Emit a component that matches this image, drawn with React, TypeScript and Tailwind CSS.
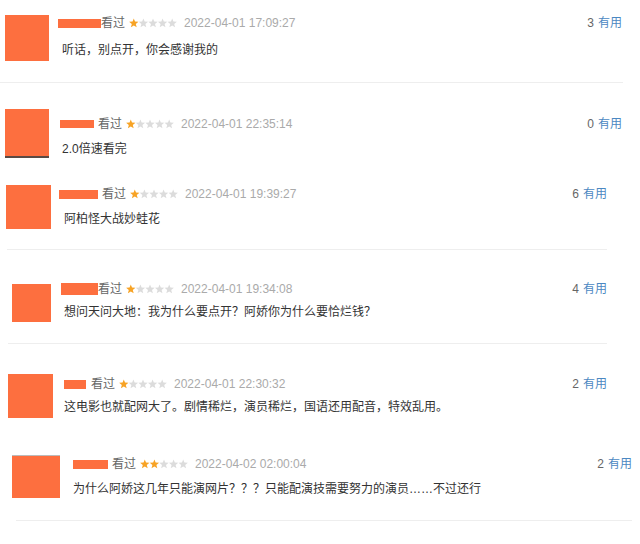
import React from "react";

type Row = {
  block: string;
  content: string;
  avatar: string;
  body: string;
  name: string;
  comment: string;
  divider?: string;
  rating: number;
  date: string;
  text: string;
  useful: number;
};

const rows: Row[] = [
  {
    block: "h-[90px]",
    content: "h-[82px]",
    avatar: "ml-[5px] mt-[15px] w-[44px] h-[46px]",
    body: "ml-[9px] mt-[15px] mr-[18px]",
    name: "w-[43px] h-[9px] mr-0",
    comment: "ml-[4px] mt-[11px]",
    divider: "ml-0 w-[623px]",
    rating: 1,
    date: "2022-04-01 17:09:27",
    text: "听话，别点开，你会感谢我的",
    useful: 3,
  },
  {
    block: "h-[85px]",
    content: "h-[85px]",
    avatar: "ml-[5px] mt-[19px] w-[44px] h-[49px] border-b-2 border-[#5a4a44]",
    body: "ml-[11px] mt-[26px] mr-[18px]",
    name: "w-[34px] h-[8px] mr-[4px]",
    comment: "ml-[2px] mt-[9px]",
    rating: 1,
    date: "2022-04-01 22:35:14",
    text: "2.0倍速看完",
    useful: 0,
  },
  {
    block: "h-[85px]",
    content: "h-[74px]",
    avatar: "ml-[6px] mt-[10px] w-[45px] h-[44px]",
    body: "ml-[8px] mt-[11px] mr-[33px]",
    name: "w-[39px] h-[9px] mr-[4px]",
    comment: "ml-[5px] mt-[9px]",
    divider: "ml-[7px] w-[600px]",
    rating: 1,
    date: "2022-04-01 19:39:27",
    text: "阿柏怪大战妙蛙花",
    useful: 6,
  },
  {
    block: "h-[90px]",
    content: "h-[83px]",
    avatar: "ml-[12px] mt-[24px] w-[39px] h-[38px]",
    body: "ml-[10px] mt-[21px] mr-[33px]",
    name: "w-[37px] h-[12px] mr-0",
    comment: "ml-[3px] mt-[7px]",
    divider: "ml-[8px] w-[599px]",
    rating: 1,
    date: "2022-04-01 19:34:08",
    text: "想问天问大地：我为什么要点开？阿娇你为什么要恰烂钱？",
    useful: 4,
  },
  {
    block: "h-[90px]",
    content: "h-[90px]",
    avatar: "ml-[8px] mt-[24px] w-[45px] h-[44px]",
    body: "ml-[11px] mt-[26px] mr-[33px]",
    name: "w-[22px] h-[9px] mr-[5px]",
    comment: "ml-0 mt-[7px]",
    rating: 1,
    date: "2022-04-01 22:30:32",
    text: "这电影也就配网大了。剧情稀烂，演员稀烂，国语还用配音，特效乱用。",
    useful: 2,
  },
  {
    block: "h-[104px]",
    content: "h-[80px]",
    avatar: "ml-[12px] mt-[15px] w-[48px] h-[43px] border-t border-[#bbbbbb]",
    body: "ml-[13px] mt-[16px] mr-[8px]",
    name: "w-[35px] h-[9px] mr-[4px]",
    comment: "ml-0 mt-[9px]",
    divider: "ml-[16px] w-[616px]",
    rating: 2,
    date: "2022-04-02 02:00:04",
    text: "为什么阿娇这几年只能演网片？？？只能配演技需要努力的演员……不过还行",
    useful: 2,
  },
];

function starPoints(cx: number, cy: number, R: number, r: number) {
  const pts: string[] = [];
  for (let i = 0; i < 10; i++) {
    const ang = -Math.PI / 2 + (i * Math.PI) / 5;
    const rad = i % 2 === 0 ? R : r;
    pts.push(`${(cx + rad * Math.cos(ang)).toFixed(2)},${(cy + rad * Math.sin(ang)).toFixed(2)}`);
  }
  return pts.join(" ");
}

function Stars({ n }: { n: number }) {
  return (
    <svg width="48" height="10" viewBox="0 0 48 10" className="ml-[4px] shrink-0">
      {[0, 1, 2, 3, 4].map((i) => (
        <polygon
          key={i}
          points={starPoints(4.8 + i * 9.6, 5.3, 4.9, 2.1)}
          fill={i < n ? "#f7a325" : "#dcdcdc"}
        />
      ))}
    </svg>
  );
}

export default function App() {
  return (
    <div
      className="w-[640px] h-[544px] overflow-hidden bg-white text-[12px] leading-[16px]"
      style={{ fontFamily: '"Liberation Sans", "Noto Sans CJK SC", Arial, sans-serif' }}
    >
      {rows.map((r, idx) => (
        <div key={idx} className={`${r.block} flex flex-col`}>
          <div className={`flex items-start shrink-0 ${r.content}`}>
            <div className={`bg-[#fd6f3f] shrink-0 ${r.avatar}`} />
            <div className={`flex-1 min-w-0 ${r.body}`}>
              <div className="flex items-center h-[16px] whitespace-nowrap">
                <span className={`bg-[#fd6f3f] shrink-0 ${r.name}`} />
                <span className="text-[#666666]">看过</span>
                <Stars n={r.rating} />
                <span className="ml-[7px] text-[#aaaaaa]">{r.date}</span>
                <span className="ml-auto">
                  <span className="text-[#666666]">{r.useful}</span>
                  <span className="ml-[4px] text-[#4b88c2]">有用</span>
                </span>
              </div>
              <p className={`text-[#333333] whitespace-nowrap ${r.comment}`}>{r.text}</p>
            </div>
          </div>
          {r.divider && <div className={`h-px bg-[#eeeeee] shrink-0 ${r.divider}`} />}
        </div>
      ))}
    </div>
  );
}
